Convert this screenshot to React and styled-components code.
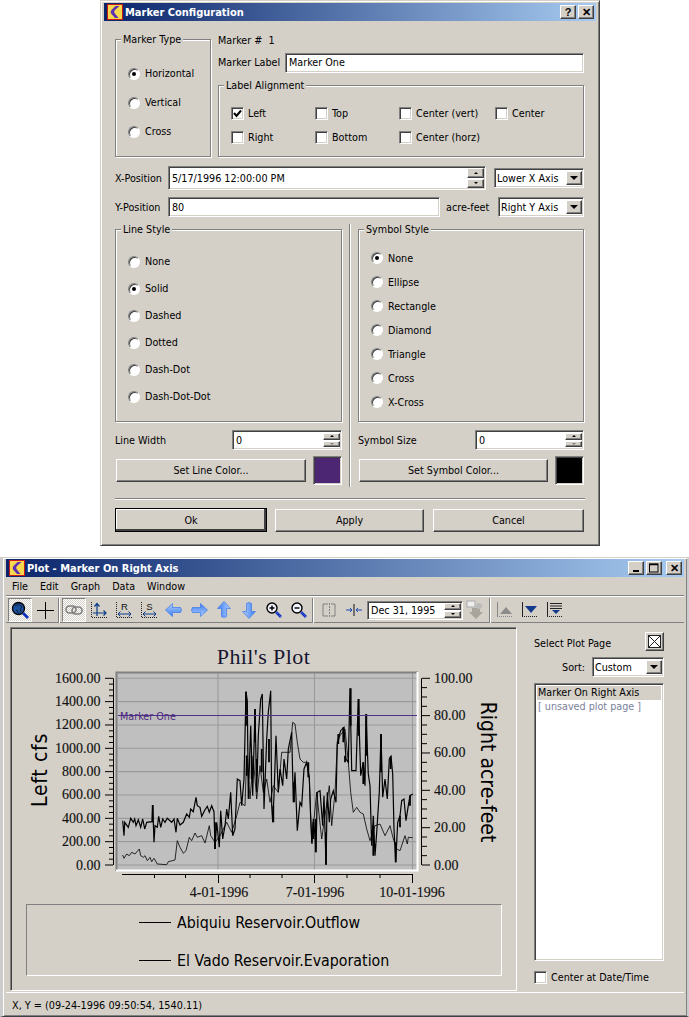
import React from "react";
import styled, { createGlobalStyle, css } from "styled-components";

const BG = "#d4d0c8";
const FONT = `"DejaVu Sans Condensed", "DejaVu Sans", sans-serif`;

const Global = createGlobalStyle`
  * { box-sizing: border-box; }
  html, body { margin: 0; padding: 0; background: #fff; }
  body { font-family: ${FONT}; font-stretch: condensed; font-size: 10.7px; color: #000; width: 689px; height: 1017px; overflow: hidden; }
`;

const sunken = css`
  border: 1px solid;
  border-color: #808080 #fff #fff #808080;
  box-shadow: inset 1px 1px #404040, inset -1px -1px ${BG};
  background: #fff;
`;
const raised = css`
  border: 1px solid;
  border-color: #fff #404040 #404040 #fff;
  box-shadow: inset -1px -1px #808080;
  background: ${BG};
`;

const Page = styled.div`display: flex; flex-direction: column; width: 689px; height: 1017px;`;

const Window = styled.section`
  display: flex;
  flex-direction: column;
  background: ${BG};
  border: 1px solid;
  border-color: ${BG} #404040 #404040 ${BG};
  box-shadow: inset 1px 1px #fff, inset -1px -1px #808080;
`;
const Dialog = styled(Window)`
  width: 500px; height: 546px; margin-left: 100px; padding: 2px 3px 0;
`;
const PlotWindow = styled(Window)`
  width: 689px; height: 460px; margin-top: 11px; padding: 1px 3px 0; border-left-width: 3px; border-left-color: #ccc; border-right-color:#ccc; border-right-width: 2px;
`;

const TitleBar = styled.header`
  flex: none;
  height: 18px;
  display: flex;
  align-items: center;
  padding: 0 2px 0 3px;
  gap: 2px;
  background: linear-gradient(90deg, #0a246a, #a6caf0);
  color: #fff;
  font-weight: bold;
  font-size: 11px;
`;
const TitleText = styled.span`flex: 1; white-space: nowrap;`;
const CapBtn = styled.button`
  ${raised}
  width: 16px; height: 14px; padding: 0; margin: 0;
  display: flex; align-items: center; justify-content: center;
  color: #000; font: bold 11px "Liberation Sans", sans-serif;
  margin-left: ${p => p.$gap || 0}px;
`;

const Logo = () => (
  <svg width="16" height="16" viewBox="0 0 16 16" style={{ flex: "none" }}>
    <rect x=".5" y=".5" width="15" height="15" fill="#f6d84e" stroke="#c81818" />
    <path d="M8.500 2 H12.500 L8 6 Q6.500 7.500 7.500 9 L11.500 14 H8 L4 9.500 Q3 7.500 4.500 6 Z" fill="#5b30b4" />
  </svg>
);

/* ---------- dialog ---------- */
const DialogBody = styled.div`
  flex: 1; display: flex; flex-direction: column; padding: 12px 12px 0 11px;
`;
const TopGrid = styled.div`display: grid; grid-template-columns: 96px 366px; gap: 7px; height: 124px;`;
const Group = styled.div`
  position: relative;
  border: 1px solid #808080;
  box-shadow: inset 1px 1px #fff, 1px 1px #fff;
`;
const GroupTitle = styled.span`
  position: absolute; top: -7px; left: 5px; padding: 0 2px; background: ${BG}; line-height: 14px; white-space: nowrap;
`;
const TypeGroup = styled(Group)`margin-top: 6px; padding: 19px 0 0 12px;`;
const RadioRow = styled.label`
  display: flex; align-items: center; gap: 5px; height: ${p => p.$h}px;
`;
const RadioDot = styled.span`
  flex: none; width: 12px; height: 12px; border-radius: 50%; background: #fff;
  border: 1px solid; border-color: #808080 #fff #fff #808080;
  box-shadow: inset 1px 1px #404040;
  display: flex; align-items: center; justify-content: center;
  &::after { content: ""; width: 4px; height: 4px; border-radius: 50%; background: ${p => (p.$on ? "#000" : "transparent")}; }
`;
const Radio = ({ on, h, children }) => (
  <RadioRow $h={h}><RadioDot $on={on} />{children}</RadioRow>
);
const RightCol = styled.div`display: flex; flex-direction: column;`;
const NumberLine = styled.div`height: 14px; line-height: 14px; padding-top: 1px; margin-bottom: 6px; white-space: pre;`;
const LabelRow = styled.div`display: flex; align-items: center; height: 19px; margin-bottom: 13px;`;
const FieldLabel = styled.span`flex: none; width: ${p => p.$w}px; white-space: nowrap; padding-left: ${p => p.$pl || 0}px;`;
const TextBox = styled.div`
  ${sunken}
  width: ${p => (p.$w ? p.$w + "px" : "auto")};
  ${p => !p.$w && "flex: 1;"}
  height: ${p => p.$h || 20}px;
  padding-left: 3px;
  display: flex; align-items: center;
  white-space: nowrap;
  position: relative;
`;
const AlignGroup = styled(Group)`
  height: 72px; padding: 15px 0 0 12px;
  display: grid; grid-template-columns: 84px 84px 96px 80px; grid-auto-rows: 24px;
`;
const CheckRow = styled.label`display: flex; align-items: center; gap: 4px; white-space: nowrap;`;
const CheckBox = styled.span`
  ${sunken}
  flex: none; width: 13px; height: 13px; display: flex; align-items: center; justify-content: center;
`;
const Check = ({ on, children }) => (
  <CheckRow>
    <CheckBox>{on && (<svg width="9" height="9" viewBox="0 0 9 9"><path d="M1 4 L3.500 7 L8 1.500" fill="none" stroke="#000" strokeWidth="2" /></svg>)}</CheckBox>
    {children}
  </CheckRow>
);
const FormRow = styled.div`display: flex; align-items: center; height: ${p => p.$h}px; margin-top: ${p => p.$mt || 0}px;`;
const SpinBtns = styled.div`
  position: absolute; right: 1px; top: 1px; bottom: 1px; width: ${p => p.$w || 17}px; display: flex; flex-direction: column; gap: 1px; padding: ${p => p.$pad || 0}px 0;
`;
const SpinBtn = styled.span`
  ${raised}
  flex: 1; display: flex; align-items: center; justify-content: center;
  &::after { content: ""; border-left: 2px solid transparent; border-right: 2px solid transparent;
    ${p => (p.$down ? "border-top: 2px solid" : "border-bottom: 2px solid")} ${p => p.$dim ? "#808080" : "#000"}; }
`;
const Spin = ({ dim, w, pad }) => (
  <SpinBtns $w={w} $pad={pad}><SpinBtn /><SpinBtn $down $dim={dim} /></SpinBtns>
);
const Select = styled.div`
  ${sunken}
  width: ${p => p.$w}px; height: ${p => p.$h || 20}px; margin-left: ${p => p.$ml || 0}px;
  flex: none; position: relative; display: flex; align-items: center; padding-left: 2px; white-space: nowrap;
`;
const SelectArrow = styled.span`
  ${raised}
  position: absolute; right: 1px; top: 2px; bottom: 2px; width: 16px;
  display: flex; align-items: center; justify-content: center;
  &::after { content: ""; border-left: 4px solid transparent; border-right: 4px solid transparent; border-top: 4px solid #000; }
`;
const StyleGrid = styled.div`
  display: grid; grid-template-columns: 227px 2px 226px; column-gap: 7px; margin-top: 7px; height: 263px;
`;
const StyleCol = styled.div`display: flex; flex-direction: column;`;
const VSep = styled.div`width: 2px; border-left: 1px solid #808080; border-right: 1px solid #fff;`;
const LineGroup = styled(Group)`margin-top: 5px; height: 193px; padding: 18px 0 0 12px;`;
const SymbolGroup = styled(Group)`margin-top: 5px; height: 193px; padding: 16px 0 0 12px;`;
const SizeRow = styled.div`display: flex; align-items: center; justify-content: space-between; margin-top: 8px; height: 20px;`;
const ColorRow = styled.div`display: flex; align-items: center; justify-content: space-between; margin-top: 6px; height: 29px; padding-left: 1px;`;
const PushBtn = styled.button`
  ${raised}
  font: inherit; font-stretch: condensed; color: #000; padding: 0; margin: 0;
  width: ${p => p.$w}px; height: ${p => p.$h}px;
  margin-left: ${p => p.$ml || 0}px;
  ${p => p.$def && css`outline: 1px solid #000; outline-offset: -1px; box-shadow: inset -2px -2px #404040, inset 1px 1px #fff;`}
`;
const Swatch = styled.div`
  ${sunken}
  width: 29px; height: 29px; background: ${p => p.$c}; box-shadow: inset 1px 1px #404040, inset -1px -1px ${BG};
`;
const HRule = styled.hr`margin: 11px 0 8px; height: 2px; border: 0; border-top: 1px solid #808080; border-bottom: 1px solid #fff; width: 470px;`;
const ActionRow = styled.div`display: flex; gap: 8px; align-items: center;`;

/* ---------- plot window ---------- */
const MenuBar = styled.nav`flex: none; height: 19px; display: flex; align-items: center; gap: 12px; padding: 1px 0 0 6px; border-bottom: 1px solid #808080;`;
const ToolBar = styled.div`
  flex: none; height: 27px; display: flex; align-items: center; padding: 1px 0 0 2px; border-top: 1px solid #fff; border-bottom: 1px solid #808080;
`;
const ToolBtn = styled.span`
  flex: none; width: ${p => p.$w || 25}px; height: 24px; margin-left: ${p => p.$ml || 0}px; display: flex; align-items: center; justify-content: center;
  ${p => p.$on && css`
    border: 1px solid; border-color: #808080 #fff #fff #808080;
    background: conic-gradient(#fff 25%, ${BG} 0 50%, #fff 0 75%, ${BG} 0) 0 0 / 2px 2px;
  `}
`;
const ToolSep = styled.span`flex: none; width: 2px; height: 25px; margin: 0 ${p => p.$r || 2}px 0 ${p => p.$l || 1}px; border-left: 1px solid #808080; border-right: 1px solid #fff;`;
const DateBox = styled(TextBox)`flex: none; margin-left: 1px;`;

const Content = styled.div`
  flex: 1; display: grid; grid-template-columns: 507px 1fr; padding: 4px 0 0 4px; min-height: 0; border-bottom: 1px solid #fff;
`;
const ChartPanel = styled.div`
  display: flex; flex-direction: column; height: 364px;
  border: 1px solid; border-color: #808080 #fff #fff #808080; box-shadow: inset 1px 1px #404040;
`;
const ChartTitle = styled.div`
  flex: none; height: 30px; margin-top: 14px; text-align: center; font: 22px/30px "Liberation Serif", serif; letter-spacing: .4px; color: #161630;
`;
const ChartSvg = styled.svg`flex: none; display: block; margin-top: -11px;`;
const AxisText = styled.text`
  font: 14px "Liberation Serif", serif; fill: #111; stroke: #111; stroke-width: .15px;
`;
const AxisTitle = styled.text`
  font-family: ${FONT}; font-stretch: condensed; font-size: 21px; fill: #000; letter-spacing: ${p => p.$ls || 0}px;
`;
const MarkerText = styled.text`
  font-family: ${FONT}; font-stretch: condensed; font-size: 10.7px; fill: #4d2a7c;
`;
const LegendBox = styled.div`
  flex: none; width: 476px; height: 72px; margin: 1px 0 0 15px;
  border: 1px solid; border-color: #808080 #fff #fff #808080;
  display: flex; flex-direction: column; gap: 18px; padding: 7px 0 0 112px;
`;
const LegendRow = styled.div`display: flex; align-items: center; gap: 6px; font-size: 15.8px; height: 20px;`;
const LegendLine = styled.span`width: 32px; height: 1px; background: #000;`;

const SidePanel = styled.aside`display: flex; flex-direction: column; padding: 5px 0 0 17px; width: 147px;`;
const PageHead = styled.div`display: flex; justify-content: space-between; height: 19px;`;
const PageHeadText = styled.span`padding-top: 5px;`;
const CloseBox = styled.span`
  ${raised}
  width: 19px; height: 19px; display: flex; align-items: center; justify-content: center;
`;
const SortRow = styled.div`display: flex; align-items: center; justify-content: flex-end; gap: 7px; height: 20px; margin-top: 6px;`;
const PageList = styled.div`
  ${sunken}
  height: 278px; margin-top: 6px; padding: 2px;
`;
const PageItem = styled.div`
  height: 14px; line-height: 14px; padding-left: 1px; white-space: nowrap;
  background: ${p => (p.$sel ? BG : "transparent")}; color: ${p => (p.$sel ? "#000" : "#7a7f9a")};
`;
const CenterRow = styled.div`margin-top: 10px;`;
const StatusBar = styled.footer`flex: none; height: 23px; display: flex; align-items: center; padding: 1px 0 0 6px; font-size: 10.8px;`;

/* ---------- toolbar icons ---------- */
const NAVY = "#0c3c86";
const Axes = ({ letter }) => (
  <svg width="18" height="18" viewBox="0 0 18 18">
    <path d="M1.500 1V16.500H17" stroke="#222" strokeDasharray="1 1" fill="none" />
    {letter ? (
      <>
        <path d="M3 13H16M5.500 10.500 L3 13 L5.500 15.500M13.500 10.500 L16 13 L13.500 15.500" stroke={NAVY} fill="none" />
        <text x="9.500" y="9" fontFamily="Liberation Sans" fontSize="9.500" textAnchor="middle" fill="#111">{letter}</text>
      </>
    ) : (
      <path d="M7 3V15M4.500 5.500 L7 2.500 L9.500 5.500M3 12H16M13.500 9.500 L16 12 L13.500 14.500" stroke={NAVY} fill="none" strokeWidth="1.200" />
    )}
  </svg>
);
const Arrow = ({ rot = 0 }) => (
  <svg width="18" height="18" viewBox="0 0 18 18">
    <defs>
      <linearGradient id="ab" x1="0" x2="0" y1="0" y2="1">
        <stop offset="0" stopColor="#b4d0ff" /><stop offset="1" stopColor="#3a7cf0" />
      </linearGradient>
    </defs>
    <path transform={`rotate(${rot} 9 9)`} d="M.5 9 L7.500 2.500 V6.500 H15.500 Q17.500 9 15.500 11.500 H7.500 V15.500 Z" fill="url(#ab)" stroke="#3c78e8" strokeWidth=".7" />
  </svg>
);
const Mag = ({ sign }) => (
  <svg width="18" height="18" viewBox="0 0 18 18">
    <circle cx="7" cy="7" r="5" fill="#f4f4ff" stroke="#000" strokeWidth="1.400" />
    <path d="M11 11 L16 16" stroke="#1030c0" strokeWidth="2.600" />
    <path d="M11 11 L16 16" stroke="#a8b8f0" strokeWidth=".6" strokeDasharray="1 1" />
    <path d={sign === "+" ? "M4.500 7H9.500M7 4.500V9.500" : "M4.500 7H9.500"} stroke="#000" strokeWidth="1.400" />
  </svg>
);
const Globe = () => (
  <svg width="19" height="19" viewBox="0 0 19 19">
    <circle cx="7.500" cy="7.500" r="6" fill="#1c4f9c" stroke="#000" strokeWidth="1.300" />
    <path d="M4 5 Q8 2 11 6 Q8 8 10 11 M5 9 Q7 9 7 12" stroke="#0c2238" fill="none" />
    <path d="M12 12 L17 17" stroke="#1030c0" strokeWidth="2.800" />
  </svg>
);
const Cross = () => (
  <svg width="17" height="17" viewBox="0 0 17 17"><path d="M0 8.500H17M8.500 0V17" stroke="#000" /></svg>
);
const LinkIcon = () => (
  <svg width="18" height="12" viewBox="0 0 18 12">
    <rect x="1" y="2" width="10" height="7" rx="3.500" fill="none" stroke="#808080" strokeWidth="1.600" />
    <rect x="7" y="3" width="10" height="7" rx="3.500" fill="none" stroke="#808080" strokeWidth="1.600" />
  </svg>
);
const Compare = () => (
  <svg width="16" height="16" viewBox="0 0 16 16">
    <path d="M7 2H2V14H7M10 2H14V14H10" fill="none" stroke="#808080" />
    <path d="M8.500 1V15" stroke="#808080" strokeDasharray="2 1" />
  </svg>
);
const Squeeze = () => (
  <svg width="16" height="14" viewBox="0 0 16 14">
    <path d="M8 1V13" stroke="#111" />
    <path d="M0 7H6M4 5 L6 7 L4 9M16 7H10M12 5 L10 7 L12 9" stroke="#1848b0" fill="none" />
  </svg>
);
const GhostDown = () => (
  <svg width="18" height="20" viewBox="0 0 18 20">
    <rect x="1" y="1" width="8" height="6" fill="#eee" stroke="#aaa" />
    <path d="M6 8H14V12H17 L10 19 L3 12H6Z" fill="#a8a49c" />
    <circle cx="13" cy="6" r="3" fill="#bbb" />
  </svg>
);
const TriAxis = ({ color, up, dots }) => (
  <svg width="18" height="16" viewBox="0 0 18 16">
    <path d="M1.500 0V14.500" stroke={dots} fill="none" />
    <path d="M1 14.500H17" stroke={dots} strokeDasharray="1 1" fill="none" />
    <path d={up ? "M4 12 L10 5 L16 12Z" : "M4 4 L16 4 L10 11Z"} fill={color} />
  </svg>
);
const ListAxis = () => (
  <svg width="18" height="16" viewBox="0 0 18 16">
    <path d="M1.500 0V14.500" stroke="#222" />
    <path d="M1 14.500H17" stroke="#222" strokeDasharray="1 1" />
    <path d="M4 1.500H16M4 4H16M4 6.500H16" stroke="#222" />
    <path d="M6 8 L14 8 L10 12Z" fill="#123a8a" />
  </svg>
);

/* ---------- chart data (traced) ---------- */
const outflow = [[68,485],[72,530],[74,490],[85,505],[92,478],[100,490],[104,480],[108,500],[115,482],[122,505],[128,480],[134,510],[140,490],[156,488],[158,438],[162,550],[165,500],[172,505],[176,472],[182,505],[188,480],[195,490],[202,478],[215,490],[222,480],[228,520],[232,478],[240,498],[250,490],[260,465],[268,475],[272,450],[280,458],[288,415],[292,440],[300,445],[305,472],[315,452],[322,442],[328,460],[335,440],[342,458],[345,570],[350,490],[358,565],[362,455],[368,540],[375,500],[380,450],[385,480],[392,400],[398,530],[405,510],[412,360],[420,365],[425,440],[432,360],[438,98],[442,125],[445,420],[452,200],[458,410],[465,150],[470,400],[475,230],[482,120],[487,105],[492,450],[500,240],[505,160],[512,95],[515,440],[518,490],[522,410],[528,230],[535,400],[540,330],[548,380],[552,300],[560,360],[565,270],[575,220],[580,430],[585,340],[592,515],[600,430],[605,440],[612,330],[620,310],[628,355],[632,480],[636,555],[640,480],[645,530],[648,580],[652,400],[660,395],[668,500],[672,410],[678,617],[682,400],[688,490],[692,420],[700,395],[708,430],[712,250],[722,215],[732,205],[738,300],[745,310],[750,88],[755,335],[768,335],[775,120],[782,350],[790,310],[795,380],[798,165],[805,345],[810,380],[815,560],[820,470],[825,590],[830,520],[838,400],[843,225],[848,415],[855,360],[862,420],[868,300],[873,292],[878,345],[882,510],[887,610],[893,490],[900,470],[905,425],[912,420],[918,485],[925,440],[930,410],[938,405]];
const evap = [[68,588],[72,598],[80,585],[88,590],[95,580],[105,585],[118,570],[122,590],[130,595],[135,590],[142,605],[150,595],[155,608],[162,598],[172,615],[200,617],[205,608],[225,603],[232,545],[240,565],[250,583],[258,575],[268,535],[275,545],[285,522],[292,535],[305,530],[315,552],[328,500],[332,530],[345,550],[360,530],[380,490],[395,520],[410,470],[420,430],[435,440],[440,290],[450,420],[460,300],[470,420],[480,320],[490,400],[500,360],[510,430],[520,380],[535,400],[545,280],[570,280],[578,190],[585,195],[592,250],[600,300],[610,310],[620,310],[628,360],[635,550],[650,400],[665,540],[688,380],[695,500],[705,400],[712,255],[720,230],[735,210],[745,310],[752,400],[760,460],[770,445],[780,460],[790,465],[800,510],[810,545],[825,500],[840,495],[855,530],[870,500],[880,540],[890,570],[900,575],[915,530],[922,555],[925,535],[938,536]];
const spikes = [[752,88,200],[776,120,230],[799,165,290],[843,225,340],[465,150,250],[438,98,200],[872,292,330],[158,438,490],[678,520,617],[647,480,580],[507,240,310],[730,205,250],[625,310,355],[715,225,255],[440,290,350],[455,290,360],[470,300,350],[485,270,340],[520,440,490],[345,490,570],[582,370,430],[640,490,540],[820,500,590],[887,550,610],[930,410,440],[900,470,505],[735,290,310],[790,310,375]];
const toPts = d => d.map(([x, y]) => `${(100 + x / 3).toFixed(1)},${(660 + y / 3).toFixed(1)}`).join(" ");
const spikePath = spikes.map(([x, a, b]) => `M${(100 + x / 3).toFixed(1)} ${(660 + a / 3).toFixed(1)}V${(660 + b / 3).toFixed(1)}`).join("");

const leftVals = ["1600.00","1400.00","1200.00","1000.00","800.00","600.00","400.00","200.00","0.00"];
const rightVals = ["100.00","80.00","60.00","40.00","20.00","0.00"];
const Y0 = 679.3, Y1 = 866;
const range = (n) => Array.from({ length: n }, (_, i) => i);

const Chart = () => {
  const lStep = (Y1 - Y0) / 8;
  const rStep = (Y1 - Y0) / 5;
  return (
    <ChartSvg width="502" height="242" viewBox="11 662 502 242">
      <rect x="117" y="674" width="300" height="197" fill="#bfbfbf" />
      {range(9).map(i => <path key={i} d={`M118 ${Y0 + i * lStep}H417`} stroke="#9a9a9a" strokeWidth="1.100" />)}
      {[218, 314.500, 412.500].map(x => <path key={x} d={`M${x} 674V871`} stroke="#9a9a9a" strokeWidth="1.100" />)}
      <path d="M116.500 872V673.500H418" fill="none" stroke="#808080" strokeWidth="2" />
      <path d="M116 871.500H417.500V673" fill="none" stroke="#fff" strokeWidth="2" />
      <polyline points={toPts(evap)} fill="none" stroke="#000" strokeWidth=".8" />
      <polyline points={toPts(outflow)} fill="none" stroke="#000" strokeWidth="1.200" />
      <path d={spikePath} fill="none" stroke="#000" strokeWidth="1.800" />
      <path d="M118 716.500H417" stroke="#54308c" />
      <MarkerText x="120" y="721">Marker One</MarkerText>

      <path d={`M113.500 ${Y0}V${Y1}`} stroke="#000" />
      {range(33).map(i => <path key={i} d={`M${i % 4 ? 109 : 105} ${Y0 + i * lStep / 4}H113`} stroke="#000" />)}
      {leftVals.map((v, i) => <AxisText key={v} x="100.500" y={Y0 + i * lStep + 4.500} textAnchor="end">{v}</AxisText>)}

      <path d={`M421.500 ${Y0}V${Y1}`} stroke="#000" />
      {range(21).map(i => <path key={i} d={`M422 ${Y0 + i * rStep / 4}H${i % 4 ? 427 : 430}`} stroke="#000" />)}
      {rightVals.map((v, i) => <AxisText key={v} x="434" y={Y0 + i * rStep + 4.500}>{v}</AxisText>)}

      <path d="M122 875.500H412.500" stroke="#000" />
      {[154.500, 185.500, 250, 282, 347, 380].map(x => <path key={x} d={`M${x} 875V879`} stroke="#000" />)}
      {[218.500, 314.500, 412.500].map(x => <path key={x} d={`M${x} 875V884`} stroke="#000" />)}
      <AxisText x="219" y="898" textAnchor="middle">4-01-1996</AxisText>
      <AxisText x="315" y="898" textAnchor="middle">7-01-1996</AxisText>
      <AxisText x="412" y="898" textAnchor="middle">10-01-1996</AxisText>

      <AxisTitle $ls={.7} textAnchor="middle" transform="translate(47 771) rotate(-90)">Left cfs</AxisTitle>
      <AxisTitle textAnchor="middle" transform="translate(481 773) rotate(90)">Right acre-feet</AxisTitle>
    </ChartSvg>
  );
};

export default function App() {
  return (
    <Page>
      <Global />
      <Dialog>
        <TitleBar>
          <Logo />
          <TitleText>Marker Configuration</TitleText>
          <CapBtn>?</CapBtn>
          <CapBtn>✕</CapBtn>
        </TitleBar>
        <DialogBody>
          <TopGrid>
            <TypeGroup>
              <GroupTitle>Marker Type</GroupTitle>
              <Radio on h={29}>Horizontal</Radio>
              <Radio h={29}>Vertical</Radio>
              <Radio h={29}>Cross</Radio>
            </TypeGroup>
            <RightCol>
              <NumberLine>Marker #  1</NumberLine>
              <LabelRow>
                <FieldLabel $w={67}>Marker Label</FieldLabel>
                <TextBox $h={20}>Marker One</TextBox>
              </LabelRow>
              <AlignGroup>
                <GroupTitle>Label Alignment</GroupTitle>
                <Check on>Left</Check>
                <Check>Top</Check>
                <Check>Center (vert)</Check>
                <Check>Center</Check>
                <Check>Right</Check>
                <Check>Bottom</Check>
                <Check>Center (horz)</Check>
              </AlignGroup>
            </RightCol>
          </TopGrid>

          <FormRow $h={24} $mt={9}>
            <FieldLabel $w={53}>X-Position</FieldLabel>
            <TextBox $w={318} $h={24}>
              5/17/1996 12:00:00 PM
              <Spin />
            </TextBox>
            <Select $w={90} $ml={8}>Lower X Axis<SelectArrow /></Select>
          </FormRow>
          <FormRow $h={20} $mt={7}>
            <FieldLabel $w={53}>Y-Position</FieldLabel>
            <TextBox $w={272} $h={20}>80</TextBox>
            <FieldLabel $w={58} $pl={6}>acre-feet</FieldLabel>
            <Select $w={86}>Right Y Axis<SelectArrow /></Select>
          </FormRow>

          <StyleGrid>
            <StyleCol>
              <LineGroup>
                <GroupTitle>Line Style</GroupTitle>
                <Radio h={27}>None</Radio>
                <Radio on h={27}>Solid</Radio>
                <Radio h={27}>Dashed</Radio>
                <Radio h={27}>Dotted</Radio>
                <Radio h={27}>Dash-Dot</Radio>
                <Radio h={27}>Dash-Dot-Dot</Radio>
              </LineGroup>
              <SizeRow>
                Line Width
                <TextBox $w={110} $h={20}>0<Spin dim pad={1} /></TextBox>
              </SizeRow>
              <ColorRow>
                <PushBtn $w={190} $h={23}>Set Line Color...</PushBtn>
                <Swatch $c="#4d2673" />
              </ColorRow>
            </StyleCol>
            <VSep />
            <StyleCol>
              <SymbolGroup>
                <GroupTitle>Symbol Style</GroupTitle>
                <Radio on h={24}>None</Radio>
                <Radio h={24}>Ellipse</Radio>
                <Radio h={24}>Rectangle</Radio>
                <Radio h={24}>Diamond</Radio>
                <Radio h={24}>Triangle</Radio>
                <Radio h={24}>Cross</Radio>
                <Radio h={24}>X-Cross</Radio>
              </SymbolGroup>
              <SizeRow>
                Symbol Size
                <TextBox $w={109} $h={20}>0<Spin dim pad={1} /></TextBox>
              </SizeRow>
              <ColorRow>
                <PushBtn $w={189} $h={23}>Set Symbol Color...</PushBtn>
                <Swatch $c="#000" />
              </ColorRow>
            </StyleCol>
          </StyleGrid>
          <HRule />
          <ActionRow>
            <PushBtn $def $w={152} $h={24}>Ok</PushBtn>
            <PushBtn $w={149} $h={23}>Apply</PushBtn>
            <PushBtn $w={151} $h={23} $ml={1}>Cancel</PushBtn>
          </ActionRow>
        </DialogBody>
      </Dialog>

      <PlotWindow>
        <TitleBar>
          <Logo />
          <TitleText>Plot - Marker On Right Axis</TitleText>
          <CapBtn><svg width="9" height="9"><rect x="1" y="6" width="6" height="2" /></svg></CapBtn>
          <CapBtn><svg width="10" height="10"><rect x=".5" y="1" width="8.500" height="8" fill="none" stroke="#000" /><path d="M0 1.500H9" stroke="#000" strokeWidth="1.500" /></svg></CapBtn>
          <CapBtn $gap={2}>✕</CapBtn>
        </TitleBar>
        <MenuBar>
          <span>File</span><span>Edit</span><span>Graph</span><span>Data</span><span>Window</span>
        </MenuBar>
        <ToolBar>
          <ToolBtn $on $w={24}><Globe /></ToolBtn>
          <ToolBtn $w={24} $ml={1}><Cross /></ToolBtn>
          <ToolSep />
          <ToolBtn $on $w={24}><LinkIcon /></ToolBtn>
          <ToolBtn><Axes /></ToolBtn>
          <ToolBtn><Axes letter="R" /></ToolBtn>
          <ToolBtn><Axes letter="S" /></ToolBtn>
          <ToolBtn><Arrow /></ToolBtn>
          <ToolBtn><Arrow rot={180} /></ToolBtn>
          <ToolBtn><Arrow rot={90} /></ToolBtn>
          <ToolBtn><Arrow rot={-90} /></ToolBtn>
          <ToolBtn><Mag sign="+" /></ToolBtn>
          <ToolBtn><Mag sign="-" /></ToolBtn>
          <ToolSep />
          <ToolBtn><Compare /></ToolBtn>
          <ToolBtn><Squeeze /></ToolBtn>
          <DateBox $w={96} $h={19}>Dec 31, 1995<Spin /></DateBox>
          <ToolBtn $w={24}><GhostDown /></ToolBtn>
          <ToolSep $l={2} $r={1} />
          <ToolBtn><TriAxis color="#8c8c8c" dots="#888" up /></ToolBtn>
          <ToolBtn><TriAxis color="#123a8a" dots="#222" /></ToolBtn>
          <ToolBtn><ListAxis /></ToolBtn>
        </ToolBar>
        <Content>
          <ChartPanel>
            <ChartTitle>Phil's Plot</ChartTitle>
            <Chart />
            <LegendBox>
              <LegendRow><LegendLine />Abiquiu Reservoir.Outflow</LegendRow>
              <LegendRow><LegendLine />El Vado Reservoir.Evaporation</LegendRow>
            </LegendBox>
          </ChartPanel>
          <SidePanel>
            <PageHead>
              <PageHeadText>Select Plot Page</PageHeadText>
              <CloseBox><svg width="13" height="13"><rect x=".5" y=".5" width="12" height="12" fill="#fff" stroke="#222" /><path d="M1 1L12 12M12 1L1 12" stroke="#222" /></svg></CloseBox>
            </PageHead>
            <SortRow>
              Sort:
              <Select $w={72}>Custom<SelectArrow /></Select>
            </SortRow>
            <PageList>
              <PageItem $sel>Marker On Right Axis</PageItem>
              <PageItem>[ unsaved plot page ]</PageItem>
            </PageList>
            <CenterRow><Check>Center at Date/Time</Check></CenterRow>
          </SidePanel>
        </Content>
        <StatusBar>X, Y = (09-24-1996 09:50:54, 1540.11)</StatusBar>
      </PlotWindow>
    </Page>
  );
}
